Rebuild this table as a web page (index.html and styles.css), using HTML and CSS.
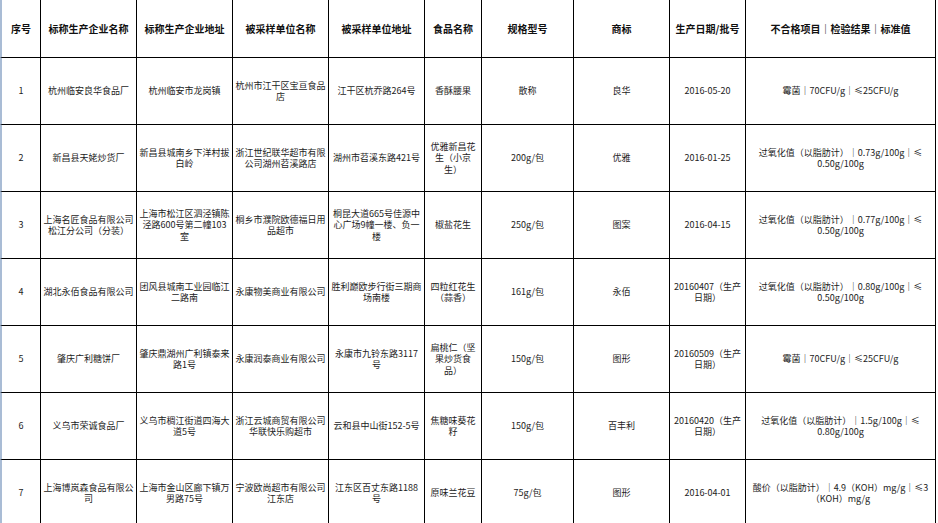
FILE: index.html
```html
<!DOCTYPE html>
<html lang="zh-CN">
<head>
<meta charset="utf-8">
<title>不合格产品信息</title>
<link rel="stylesheet" href="styles.css">
</head>
<body>
<div class="sheet">
  <div class="cell head">序号</div>
  <div class="cell head">标称生产企业名称</div>
  <div class="cell head">标称生产企业地址</div>
  <div class="cell head">被采样单位名称</div>
  <div class="cell head">被采样单位地址</div>
  <div class="cell head">食品名称</div>
  <div class="cell head">规格型号</div>
  <div class="cell head">商标</div>
  <div class="cell head">生产日期/批号</div>
  <div class="cell head">不合格项目｜检验结果｜标准值</div>

  <div class="cell">1</div>
  <div class="cell">杭州临安良华食品厂</div>
  <div class="cell">杭州临安市龙岗镇</div>
  <div class="cell">杭州市江干区宝亘食品<br>店</div>
  <div class="cell">江干区杭乔路264号</div>
  <div class="cell">香酥腰果</div>
  <div class="cell">散称</div>
  <div class="cell">良华</div>
  <div class="cell">2016-05-20</div>
  <div class="cell">霉菌｜70CFU/g｜≤25CFU/g</div>

  <div class="cell">2</div>
  <div class="cell">新昌县天姥炒货厂</div>
  <div class="cell">新昌县城南乡下洋村拔<br>白岭</div>
  <div class="cell">浙江世纪联华超市有限<br>公司湖州苕溪路店</div>
  <div class="cell">湖州市苕溪东路421号</div>
  <div class="cell">优雅新昌花<br>生（小京<br>生）</div>
  <div class="cell">200g/包</div>
  <div class="cell">优雅</div>
  <div class="cell">2016-01-25</div>
  <div class="cell">过氧化值（以脂肪计）｜0.73g/100g｜≤<br>0.50g/100g</div>

  <div class="cell">3</div>
  <div class="cell">上海名匠食品有限公司<br>松江分公司（分装）</div>
  <div class="cell">上海市松江区泗泾镇陈<br>泾路600号第二幢103<br>室</div>
  <div class="cell">桐乡市濮院欧德福日用<br>品超市</div>
  <div class="cell">桐昆大道665号佳源中<br>心广场9幢一楼、负一<br>楼</div>
  <div class="cell">椒盐花生</div>
  <div class="cell">250g/包</div>
  <div class="cell">图案</div>
  <div class="cell">2016-04-15</div>
  <div class="cell">过氧化值（以脂肪计）｜0.77g/100g｜≤<br>0.50g/100g</div>

  <div class="cell">4</div>
  <div class="cell">湖北永佰食品有限公司</div>
  <div class="cell">团风县城南工业园临江<br>二路南</div>
  <div class="cell">永康物美商业有限公司</div>
  <div class="cell">胜利巅欧步行街三期商<br>场南楼</div>
  <div class="cell">四粒红花生<br>（蒜香）</div>
  <div class="cell">161g/包</div>
  <div class="cell">永佰</div>
  <div class="cell">20160407（生产<br>日期）</div>
  <div class="cell">过氧化值（以脂肪计）｜0.80g/100g｜≤<br>0.50g/100g</div>

  <div class="cell">5</div>
  <div class="cell">肇庆广利糖饼厂</div>
  <div class="cell">肇庆鼎湖州广利镇泰来<br>路1号</div>
  <div class="cell">永康润泰商业有限公司</div>
  <div class="cell">永康市九铃东路3117<br>号</div>
  <div class="cell">扁桃仁（坚<br>果炒货食<br>品）</div>
  <div class="cell">150g/包</div>
  <div class="cell">图形</div>
  <div class="cell">20160509（生产<br>日期）</div>
  <div class="cell">霉菌｜70CFU/g｜≤25CFU/g</div>

  <div class="cell">6</div>
  <div class="cell">义乌市荣诚食品厂</div>
  <div class="cell">义乌市稠江街道四海大<br>道5号</div>
  <div class="cell">浙江云城商贸有限公司<br>华联快乐购超市</div>
  <div class="cell">云和县中山街152-5号</div>
  <div class="cell">焦糖味葵花<br>籽</div>
  <div class="cell">150g/包</div>
  <div class="cell">百丰利</div>
  <div class="cell">20160420（生产<br>日期）</div>
  <div class="cell">过氧化值（以脂肪计）｜1.5g/100g｜≤<br>0.80g/100g</div>

  <div class="cell">7</div>
  <div class="cell">上海博岚森食品有限公<br>司</div>
  <div class="cell">上海市金山区廊下镇万<br>男路75号</div>
  <div class="cell">宁波欧尚超市有限公司<br>江东店</div>
  <div class="cell">江东区百丈东路1188<br>号</div>
  <div class="cell">原味兰花豆</div>
  <div class="cell">75g/包</div>
  <div class="cell">图形</div>
  <div class="cell">2016-04-01</div>
  <div class="cell">酸价（以脂肪计）｜4.9（KOH）mg/g｜≤3<br>（KOH）mg/g</div>
</div>
</body>
</html>
```

FILE: styles.css
```css
html, body {
  margin: 0;
  padding: 0;
  background: #ffffff;
}

body {
  width: 938px;
  height: 523px;
  overflow: hidden;
  font-family: "Noto Sans CJK SC", "Noto Sans", sans-serif;
  color: #1c1c1c;
}

.sheet {
  display: grid;
  grid-template-columns: 41px 96px 96px 96px 96px 57px 92px 96px 76px 190px;
  grid-template-rows: 58px repeat(7, 67px);
  width: 936px;
}

.cell {
  box-sizing: border-box;
  border-right: 1px solid #000;
  border-bottom: 1px solid #000;
  display: flex;
  align-items: center;
  justify-content: center;
  text-align: center;
  white-space: nowrap;
  font-size: 9px;
  line-height: 11.5px;
  overflow: hidden;
}

.cell:nth-child(10n+1) {
  border-left: 2px solid #a9bcd5;
}

.head {
  font-size: 10px;
  font-weight: 700;
  color: #111;
}
```
